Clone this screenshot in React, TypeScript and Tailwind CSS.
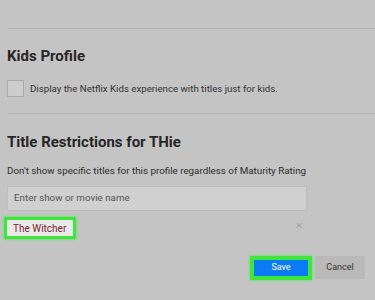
export default function App() {
  return (
    <main className="w-[375px] h-[300px] overflow-hidden bg-[#c4c4c4] text-[#222] font-['Roboto',Arial,sans-serif]">
      <div className="h-[28px]" />
      <div className="ml-[8px] border-t border-[#b3b3b3]" />

      {/* Kids profile */}
      <section className="px-[7px]">
        <h2 className="mt-[17px] h-[20px] text-[15px] leading-[20px] font-bold text-[#262626]">
          Kids Profile
        </h2>
        <label className="mt-[14px] flex items-center gap-[6px]">
          <span className="h-[17px] w-[17px] border border-[#a9a9a9] bg-[#cdcdcd]" />
          <span className="text-[9.7px] leading-[17px] text-[#333]">
            Display the Netflix Kids experience with titles just for kids.
          </span>
        </label>
      </section>

      <div className="mt-[16px] ml-[8px] border-t border-[#b6b6b6]" />

      {/* Title restrictions */}
      <section className="px-[7px]">
        <h2 className="mt-[18px] h-[20px] text-[15px] leading-[20px] font-bold text-[#262626]">
          Title Restrictions for THie
        </h2>
        <p className="mt-[12px] text-[9.8px] leading-[14px] text-[#2c2c2c]">
          Don't show specific titles for this profile regardless of Maturity Rating
        </p>
        <div className="mt-[8px] flex h-[25px] w-[300px] items-center border border-[#bdbdbd] bg-[#d0d0d0] px-[6px] text-[9.8px] text-[#555]">
          Enter show or movie name
        </div>
        <div className="mt-[6px] flex w-[300px] items-center justify-between">
          <div className="-ml-[3px] flex h-[22px] w-[72px] items-center whitespace-nowrap border-[3px] border-[#3ee63e] bg-[#e9e9e9] pl-[6px] text-[10px] text-[#7a1e2c] shadow-[0_0_3px_#4ef04e]">
            The Witcher
          </div>
          <span className="mr-[4px] -mt-[6px] text-[10px] text-[#a5a5a5]">✕</span>
        </div>

        <div className="mt-[17px] flex justify-end gap-[3px] pr-[3px]">
          <div className="flex h-[24px] w-[62px] items-center justify-center border-[4px] border-[#3ee63e] bg-[#0a7bf5] text-[9px] text-white shadow-[0_0_3px_#4ef04e]">
            Save
          </div>
          <div className="flex h-[23px] w-[50px] items-center justify-center bg-[#b9b9b9] text-[9px] text-[#333]">
            Cancel
          </div>
        </div>
      </section>
    </main>
  );
}
